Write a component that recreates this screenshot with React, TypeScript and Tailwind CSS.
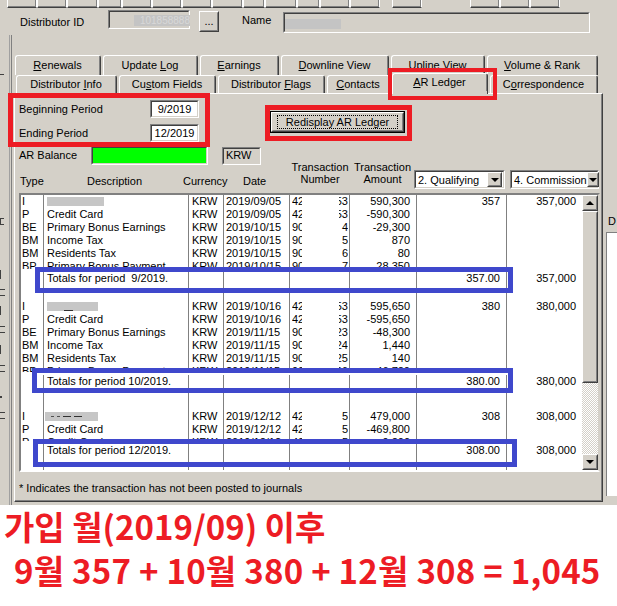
import React from 'react';

type Line = {
  t: string;
  d?: string;
  r?: 1 | 2 | 3;
  date: string;
  nl: string;
  nr: string;
  amt: string;
  q?: string;
  c?: string;
};

const cols = ['w-[23px]', 'w-[145px]', 'w-[35px]', 'w-[66px]', 'w-[60px]', 'w-[67px]', 'w-[90px]', 'w-[75px]'];
const pads = ['pl-[1px]', 'pl-[3px]', 'pl-[3px]', 'pl-[2px]', 'flex justify-between pl-[2px] pr-[1px]', 'text-right pr-[6px]', 'text-right pr-[6px]', 'text-right pr-[6px]'];

const group1: Line[] = [
  { t: 'I', r: 1, date: '2019/09/05', nl: '42', nr: '53', amt: '590,300', q: '357', c: '357,000' },
  { t: 'P', d: 'Credit Card', date: '2019/09/05', nl: '42', nr: '53', amt: '-590,300' },
  { t: 'BE', d: 'Primary Bonus Earnings', date: '2019/10/15', nl: '90', nr: '4', amt: '-29,300' },
  { t: 'BM', d: 'Income Tax', date: '2019/10/15', nl: '90', nr: '5', amt: '870' },
  { t: 'BM', d: 'Residents Tax', date: '2019/10/15', nl: '90', nr: '6', amt: '80' },
  { t: 'BP', d: 'Primary Bonus Payment', date: '2019/10/15', nl: '90', nr: '7', amt: '28,350' },
];

const group2: Line[] = [
  { t: 'I', r: 2, date: '2019/10/16', nl: '42', nr: '53', amt: '595,650', q: '380', c: '380,000' },
  { t: 'P', d: 'Credit Card', date: '2019/10/16', nl: '42', nr: '53', amt: '-595,650' },
  { t: 'BE', d: 'Primary Bonus Earnings', date: '2019/11/15', nl: '90', nr: '23', amt: '-48,300' },
  { t: 'BM', d: 'Income Tax', date: '2019/11/15', nl: '90', nr: '24', amt: '1,440' },
  { t: 'BM', d: 'Residents Tax', date: '2019/11/15', nl: '90', nr: '25', amt: '140' },
  { t: 'BP', d: 'Primary Bonus Payment', date: '2019/11/15', nl: '90', nr: '26', amt: '46,720' },
];

const group3: Line[] = [
  { t: 'I', r: 3, date: '2019/12/12', nl: '42', nr: '5', amt: '479,000', q: '308', c: '308,000' },
  { t: 'P', d: 'Credit Card', date: '2019/12/12', nl: '42', nr: '5', amt: '-469,800' },
  { t: 'P', d: 'Credit Card', date: '2019/12/12', nl: '42', nr: '5', amt: '9,200' },
];

function Sunken({ className = '', inner = '', children }: { className?: string; inner?: string; children?: React.ReactNode }) {
  return (
    <div className={`border border-t-[#808080] border-l-[#808080] border-b-white border-r-white ${className}`}>
      <div className={`h-full w-full border border-t-[#404040] border-l-[#404040] border-b-[#d4d0c8] border-r-[#d4d0c8] ${inner}`}>
        {children}
      </div>
    </div>
  );
}

function Raised({ className = '', children }: { className?: string; children?: React.ReactNode }) {
  return (
    <div className={`border border-t-white border-l-white border-b-[#404040] border-r-[#404040] bg-[#d4d0c8] ${className}`}>
      <div className="flex h-full w-full items-center justify-center border border-t-[#d4d0c8] border-l-[#d4d0c8] border-b-[#808080] border-r-[#808080]">
        {children}
      </div>
    </div>
  );
}

function Arrow({ up }: { up?: boolean }) {
  return up ? (
    <div className="h-0 w-0 border-x-[4px] border-b-[4px] border-x-transparent border-b-black" />
  ) : (
    <div className="h-0 w-0 border-x-[4px] border-t-[4px] border-x-transparent border-t-black" />
  );
}

function Tab({ w, sel, children }: { w: string; sel?: boolean; children: React.ReactNode }) {
  return (
    <div
      className={`${w} relative shrink-0 rounded-t-[3px] border-t border-l border-r border-b-0 border-t-white border-l-white border-r-[#404040] bg-[#d4d0c8] ${
        sel ? 'z-10 -mb-px h-[21px] pb-[3px]' : 'h-full'
      }`}
    >
      <div className="flex h-full items-center justify-center whitespace-nowrap border-r border-[#808080]">{children}</div>
    </div>
  );
}

function Cells({ h, items = [] }: { h: string; items?: React.ReactNode[] }) {
  return (
    <div className={`flex ${h} overflow-hidden leading-[13px]`}>
      {cols.map((w, i) => (
        <div key={i} className={`${w} ${pads[i]} shrink-0 overflow-hidden whitespace-nowrap ${i < 7 ? 'border-r border-[#808080]' : ''}`}>
          {items[i]}
        </div>
      ))}
    </div>
  );
}

function Redact({ kind }: { kind: 1 | 2 | 3 }) {
  if (kind === 1) return <div className="mt-[2px] h-[9px] w-[57px] bg-[#c6c6c6]" />;
  if (kind === 2)
    return (
      <div className="mt-[2px] flex h-[9px] w-[51px] items-end bg-[#c6c6c6] pl-[17px]">
        <div className="h-px w-[9px] bg-[#303030]" />
      </div>
    );
  return (
    <div className="-ml-[2px] mt-[2px] flex h-[9px] w-[53px] items-center gap-[3px] bg-[#c6c6c6] pl-[6px]">
      <div className="h-px w-[3px] bg-[#505050]" />
      <div className="h-px w-[3px] bg-[#505050]" />
      <div className="h-px w-[8px] bg-[#303030]" />
      <div className="h-px w-[8px] bg-[#303030]" />
    </div>
  );
}

function lineCells(l: Line): React.ReactNode[] {
  return [
    l.t,
    l.r ? <Redact kind={l.r} /> : l.d,
    'KRW',
    l.date,
    <>
      <span className="w-[10px] overflow-hidden">{l.nl}</span>
      <span className="flex w-[9px] justify-end overflow-hidden">{l.nr}</span>
    </>,
    l.amt,
    l.q,
    l.c,
  ];
}

function Group({ lines, part, gap, period, q, c }: { lines: Line[]; part: string; gap: string; period: string; q: string; c: string }) {
  const full = lines.slice(0, -1);
  const last = lines[lines.length - 1];
  return (
    <>
      {full.map((l, i) => (
        <Cells key={i} h="h-[13px]" items={lineCells(l)} />
      ))}
      <Cells h={part} items={lineCells(last)} />
      <div className="pt-[3px]">
        <Cells h="h-[13px]" items={['', period, '', '', '', '', q, c]} />
      </div>
      <Cells h={gap} />
    </>
  );
}

function Dropdown({ w, label }: { w: string; label: string }) {
  return (
    <Sunken className={`${w} h-[19px]`} inner="flex items-center bg-white pl-[2px] pr-px">
      <span className="flex-1 whitespace-nowrap">{label}</span>
      <Raised className="h-[15px] w-[15px]">
        <Arrow />
      </Raised>
    </Sunken>
  );
}

export default function App() {
  return (
    <div className="relative h-[606px] w-[617px] overflow-hidden bg-white font-['Liberation_Sans',Arial,sans-serif] text-[11px] text-black">
      <div className="h-[505px] bg-[#d4d0c8]">
        {/* toolbar bottoms */}
        <div className="flex h-[8px]">
          <div className="w-[7px]" />
          {['w-[30px]', 'w-[30px]', 'w-[31px]', 'w-[24px]', 'w-[30px]', 'w-[30px]', 'w-[30px]', 'w-[31px]', 'w-[22px]', 'w-[32px]', 'w-[23px]', 'w-[30px]', 'w-[30px]'].map((w, i) => (
            <div key={i} className={`${w} border-x border-b border-x-white border-b-[#404040] shadow-[inset_-1px_-1px_0_#808080]`} />
          ))}
          <div className="w-[12px]" />
          <div className="w-[30px] border-x border-b border-x-white border-b-[#404040] shadow-[inset_-1px_-1px_0_#808080]" />
          <div className="w-[48px]" />
          <div className="w-[30px] border-x border-b border-x-white border-b-[#404040] shadow-[inset_-1px_-1px_0_#808080]" />
          <div className="w-[30px] border-x border-b border-x-white border-b-[#404040] shadow-[inset_-1px_-1px_0_#808080]" />
          <div className="w-[30px] border-x border-b border-x-white border-b-[#404040] shadow-[inset_-1px_-1px_0_#808080]" />
        </div>

        <div className="flex h-[497px]">
          {/* left edge of neighbouring pane */}
          <div className="flex w-[14px] shrink-0">
            <div className="flex w-[8px] flex-col items-start pt-[66px]">
              <div className="h-px w-[4px] bg-[#404040]" />
              <div className="mt-[143px] h-[7px] w-[4px] border-l border-y border-[#404040]" />
              <div className="mt-[45px] h-[9px] w-px bg-[#404040]" />
              <div className="mt-[10px] h-[7px] w-[5px] border-y border-[#404040]" />
              <div className="mt-[10px] h-[9px] w-px bg-[#404040]" />
              <div className="mt-[11px] h-[7px] w-[5px] border-y border-[#404040]" />
              <div className="mt-[12px] h-[9px] w-px bg-[#404040]" />
              <div className="mt-[11px] h-[7px] w-[5px] border-y border-[#404040]" />
              <div className="mt-[24px] h-[2px] w-[2px] bg-[#404040]" />
              <div className="mt-[14px] h-[7px] w-[5px] border-y border-[#404040]" />
            </div>
            <div className="mt-[27px] w-[2px] border-r border-[#a0a0a0]" />
            <div className="mt-[27px] w-[2px] border-r border-[#808080]" />
          </div>

          {/* main form */}
          <div className="w-[589px] shrink-0">
            <div className="mt-[2px] flex h-[23px] items-start">
              <div className="ml-[6px] mt-[6px] w-[88px] leading-[13px]">Distributor ID</div>
              <Sunken className="h-[19px] w-[82px]" inner="pl-[24px] pt-[3px]">
                <div className="h-[11px] w-[56px] bg-[#c4c4c4] text-right text-[10px] leading-[11px] text-[#d8d8d8]">101858888</div>
              </Sunken>
              <Raised className="ml-[9px] mt-px h-[21px] w-[20px]">
                <span className="leading-[11px]">...</span>
              </Raised>
              <div className="ml-[23px] mt-[4px] w-[41px] leading-[13px]">Name</div>
              <Sunken className="mt-[2px] h-[21px] w-[307px]" inner="pt-[5px]">
                <div className="h-[10px] w-[56px] bg-[#c4c4c4]" />
              </Sunken>
            </div>

            {/* tabs */}
            <div className="ml-px mt-[22px] flex h-[20px] gap-[2px]">
              <Tab w="w-[86px]"><span><u>R</u>enewals</span></Tab>
              <Tab w="w-[95px]"><span>Update <u>L</u>og</span></Tab>
              <Tab w="w-[79px]"><span><u>E</u>arnings</span></Tab>
              <Tab w="w-[108px]"><span><u>D</u>ownline View</span></Tab>
              <Tab w="w-[94px]"><span><u>U</u>pline View</span></Tab>
              <Tab w="w-[111px]"><span><u>V</u>olume &amp; Rank</span></Tab>
            </div>
            <div className="ml-[2px] flex h-[18px] items-end gap-[2px]">
              <Tab w="w-[101px]"><span>Distributor <u>I</u>nfo</span></Tab>
              <Tab w="w-[97px]"><span>Cu<u>s</u>tom Fields</span></Tab>
              <Tab w="w-[107px]"><span>Distributor <u>F</u>lags</span></Tab>
              <Tab w="w-[63px]"><span><u>C</u>ontacts</span></Tab>
              <Tab w="w-[96px]" sel><span><u>A</u>R Ledger</span></Tab>
              <Tab w="w-[108px]"><span>C<u>o</u>rrespondence</span></Tab>
            </div>

            {/* tab panel */}
            <div className="h-[409px] border-t border-l border-r border-b border-t-white border-l-white border-r-[#404040] border-b-[#404040]">
              <div className="h-full border-r border-b border-[#808080] pl-[4px]">
                <div className="flex items-start pt-[6px]">
                  <div className="flex flex-col gap-[6px]">
                    <div className="flex h-[18px] items-center">
                      <div className="w-[131px]">Beginning Period</div>
                      <Sunken className="h-[18px] w-[49px]" inner="flex items-center justify-center bg-white">9/2019</Sunken>
                    </div>
                    <div className="flex h-[18px] items-center">
                      <div className="w-[131px]">Ending Period</div>
                      <Sunken className="h-[18px] w-[49px]" inner="flex items-center justify-center bg-white">12/2019</Sunken>
                    </div>
                  </div>
                  <div className="ml-[71px] mt-[11px] h-[22px] w-[135px] border border-black">
                    <Raised className="h-full w-full">
                      <span className="whitespace-nowrap border border-dotted border-black px-[8px] leading-[12px]">Redisplay AR Ledger</span>
                    </Raised>
                  </div>
                </div>

                <div className="mt-[4px] flex h-[19px] items-center">
                  <div className="w-[72px]">AR Balance</div>
                  <Sunken className="h-[19px] w-[117px]" inner="bg-[#00ff00]" />
                  <Sunken className="ml-[14px] h-[18px] w-[39px]" inner="flex items-center pl-[2px]">KRW</Sunken>
                </div>

                {/* column headers */}
                <div className="flex h-[28px] items-end pb-[4px] leading-[12px]">
                  <div className="mb-[2px] w-[68px] pl-px">Type</div>
                  <div className="mb-[2px] w-[96px]">Description</div>
                  <div className="mb-[2px] w-[60px]">Currency</div>
                  <div className="mb-[2px] w-[46px]">Date</div>
                  <div className="mb-[4px] w-[62px] text-center">Transaction<br />Number</div>
                  <div className="mb-[4px] w-[63px] text-center">Transaction<br />Amount</div>
                  <Dropdown w="w-[91px]" label="2. Qualifying" />
                  <div className="w-[5px]" />
                  <Dropdown w="w-[89px]" label="4. Commission" />
                </div>

                {/* ledger grid */}
                <div className="h-[279px] w-[581px] border-2 border-t-[#808080] border-l-[#808080] border-b-white border-r-[#d4d0c8]">
                  <div className="flex h-full bg-white">
                    <div className="w-[561px]">
                      <Group lines={group1} part="h-[9px]" gap="h-[15px]" period={'Totals for period\u00a0\u00a09/2019.'} q="357.00" c="357,000" />
                      <Group lines={group2} part="h-[7px]" gap="h-[22px]" period="Totals for period 10/2019." q="380.00" c="380,000" />
                      <Group lines={group3} part="h-[5px]" gap="h-[13px]" period="Totals for period 12/2019." q="308.00" c="308,000" />
                    </div>
                    <div className="flex w-[16px] flex-col bg-[repeating-conic-gradient(#ffffff_0%_25%,#d4d0c8_0%_50%)] bg-size-[2px_2px]">
                      <Raised className="h-[16px] w-[16px]">
                        <Arrow up />
                      </Raised>
                      <Raised className="h-[172px] w-[16px]" />
                      <div className="flex-1" />
                      <Raised className="h-[16px] w-[16px]">
                        <Arrow />
                      </Raised>
                    </div>
                  </div>
                </div>

                <div className="pt-[10px] leading-[13px]">* Indicates the transaction has not been posted to journals</div>
              </div>
            </div>
          </div>

          {/* right neighbouring pane */}
          <div className="flex w-[14px] shrink-0 flex-col pl-[3px] pt-[207px]">
            <div className="pl-[2px] leading-[13px]">D</div>
            <div className="mt-[4px] h-[264px] border-l border-t border-[#808080] bg-white" />
          </div>
        </div>
      </div>

      <div className="px-[4px] font-['Noto_Sans_CJK_KR',sans-serif] font-bold text-[#ed1c24]">
        <div className="text-[33px] leading-[42px]">가입 월(2019/09) 이후</div>
        <div className="pl-[10px] text-[33px] leading-[46px] tracking-[0.25px]">9월 357 + 10월 380 + 12월 308 = 1,045</div>
      </div>

      {/* annotation boxes */}
      <div className="absolute left-[388px] top-[68px] h-[32px] w-[109px] border-4 border-[#ed1c24]" />
      <div className="absolute left-[8px] top-[93px] h-[54px] w-[202px] border-[5px] border-[#ed1c24]" />
      <div className="absolute left-[265px] top-[105px] h-[36px] w-[147px] border-[5px] border-[#ed1c24]" />
      <div className="absolute left-[35px] top-[267px] h-[26px] w-[478px] border-[5px] border-[#3f48cc]" />
      <div className="absolute left-[32px] top-[368px] h-[25px] w-[481px] border-[5px] border-[#3f48cc]" />
      <div className="absolute left-[33px] top-[439px] h-[28px] w-[484px] border-[5px] border-[#3f48cc]" />
    </div>
  );
}
